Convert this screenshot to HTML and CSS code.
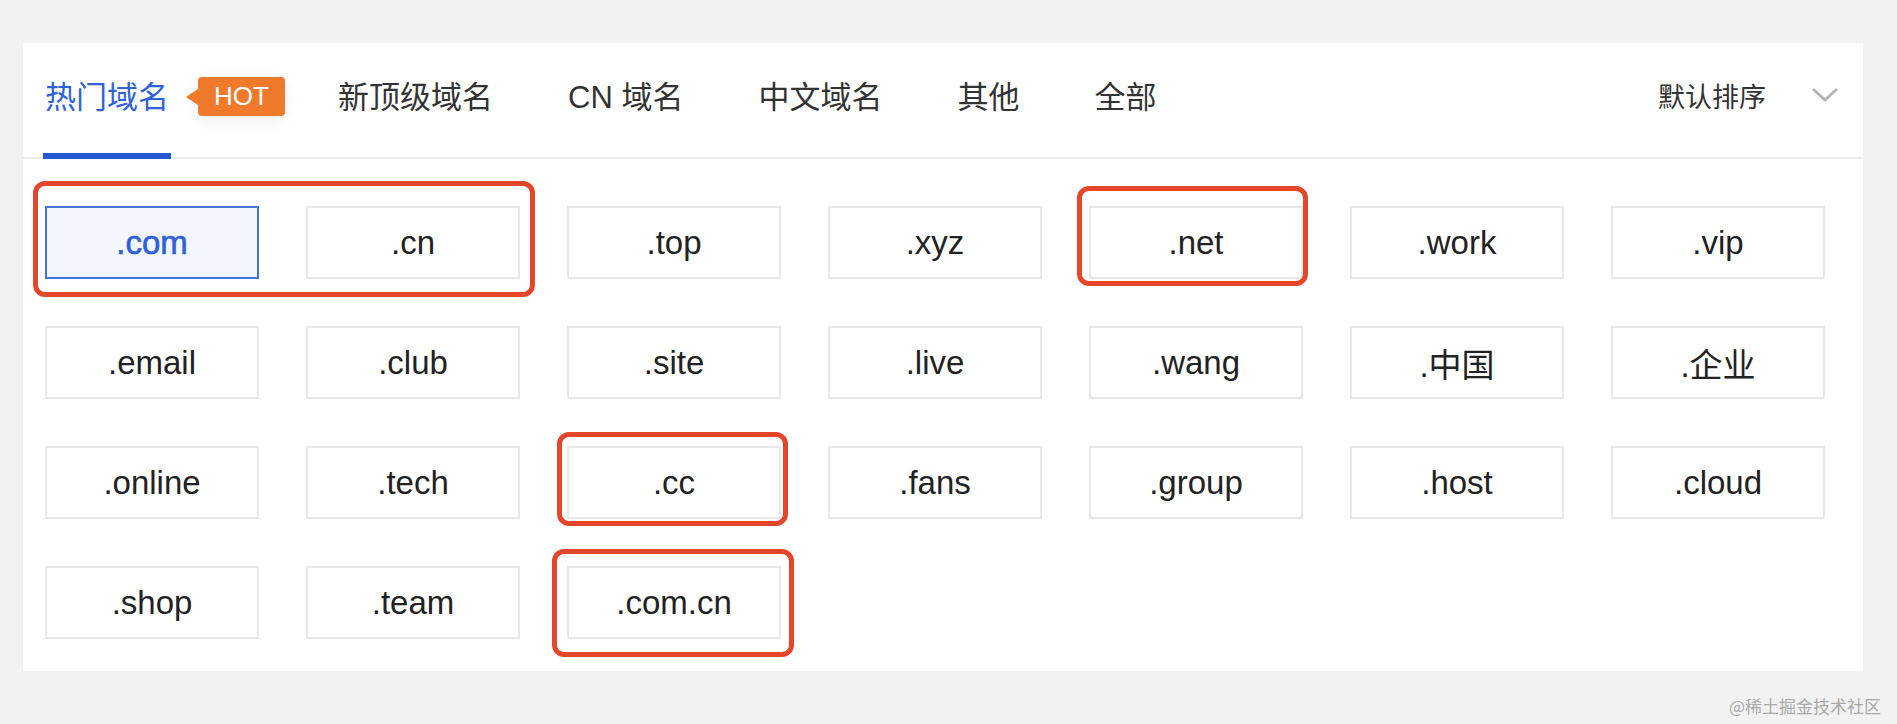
FILE: index.html
```html
<!DOCTYPE html>
<html lang="zh-CN">
<head>
    <meta charset="UTF-8">
    <meta name="viewport" content="width=device-width, initial-scale=1.0">
    <title>域名注册</title>
    <link rel="stylesheet" href="styles.css">
</head>
<body>
    <div class="panel">
        <div class="tabs">
            <div class="tab active">热门域名</div>
            <span class="hot">HOT</span>
            <div class="tab">新顶级域名</div>
            <div class="tab">CN 域名</div>
            <div class="tab">中文域名</div>
            <div class="tab">其他</div>
            <div class="tab">全部</div>
            <div class="sort">
                <span>默认排序</span>
                <svg class="chevron" width="28" height="16" viewBox="0 0 28 16">
                    <path d="M2 2 L14 13 L26 2" fill="none" stroke="#b4b4b8" stroke-width="3"/>
                </svg>
            </div>
        </div>

        <div class="grid">
            <div class="suffix selected">.com</div>
            <div class="suffix">.cn</div>
            <div class="suffix">.top</div>
            <div class="suffix">.xyz</div>
            <div class="suffix">.net</div>
            <div class="suffix">.work</div>
            <div class="suffix">.vip</div>

            <div class="suffix">.email</div>
            <div class="suffix">.club</div>
            <div class="suffix">.site</div>
            <div class="suffix">.live</div>
            <div class="suffix">.wang</div>
            <div class="suffix">.中国</div>
            <div class="suffix">.企业</div>

            <div class="suffix">.online</div>
            <div class="suffix">.tech</div>
            <div class="suffix">.cc</div>
            <div class="suffix">.fans</div>
            <div class="suffix">.group</div>
            <div class="suffix">.host</div>
            <div class="suffix">.cloud</div>

            <div class="suffix">.shop</div>
            <div class="suffix">.team</div>
            <div class="suffix">.com.cn</div>
        </div>

        <!-- 标注框 -->
        <div class="mark mark-a"></div>
        <div class="mark mark-b"></div>
        <div class="mark mark-c"></div>
        <div class="mark mark-d"></div>
    </div>
    <div class="watermark">@稀土掘金技术社区</div>
</body>
</html>
```

FILE: styles.css
```css
body {
    margin: 0;
    background-color: #f2f2f2;
    font-family: "Liberation Sans", "Noto Sans CJK SC", sans-serif;
    color: #222;
}
.panel {
    position: relative;
    margin: 43px 0 0 23px;
    width: 1840px;
    height: 628px;
    background-color: #fff;
    box-sizing: border-box;
}
.tabs {
    display: flex;
    align-items: stretch;
    height: 116px;
    padding-left: 20px;
    border-bottom: 2px solid #ececec;
    box-sizing: border-box;
}
.tab {
    display: flex;
    align-items: center;
    padding: 0 2px 8px;
    margin-right: 71px;
    font-size: 31px;
    color: #333;
    border-bottom: 6px solid transparent;
    margin-bottom: -2px;
}
.tab.active {
    color: #2f62d8;
    border-bottom-color: #2357d3;
    margin-right: 0;
}
.hot {
    position: relative;
    align-self: center;
    margin: -8px 51px 0 27px;
    width: 87px;
    height: 39px;
    line-height: 39px;
    text-align: center;
    font-size: 26px;
    color: #fff;
    background-color: #ef7a2c;
    border-radius: 4px;
    box-shadow: 0 4px 16px rgba(0, 0, 0, 0.08);
}
.hot::before {
    content: "";
    position: absolute;
    left: -12px;
    top: 12px;
    border-top: 8px solid transparent;
    border-bottom: 8px solid transparent;
    border-right: 12px solid #ef7a2c;
}
.sort {
    margin-left: auto;
    display: flex;
    align-items: center;
    padding-right: 24px;
    padding-bottom: 10px;
    font-size: 27px;
    color: #333;
}
.chevron {
    margin-left: 45px;
}
.grid {
    display: grid;
    grid-template-columns: repeat(7, 214px);
    grid-auto-rows: 73px;
    column-gap: 47px;
    row-gap: 47px;
    padding: 47px 0 0 22px;
}
.suffix {
    display: flex;
    align-items: center;
    justify-content: center;
    border: 2px solid #e8e8e8;
    font-size: 33px;
    color: #222;
}
.suffix.selected {
    border-color: #4274d9;
    background-color: #f3f6fd;
    color: #2d5fd6;
    -webkit-text-stroke: 0.6px #2d5fd6;
}
.mark {
    position: absolute;
    border: 5px solid #e4462b;
    border-radius: 12px;
    box-sizing: border-box;
}
.mark-a { left: 10px; top: 138px; width: 502px; height: 116px; }
.mark-b { left: 1054px; top: 143px; width: 231px; height: 100px; }
.mark-c { left: 534px; top: 389px; width: 231px; height: 94px; }
.mark-d { left: 529px; top: 506px; width: 242px; height: 108px; }
.watermark {
    margin-top: 22px;
    padding-right: 16px;
    text-align: right;
    font-family: "Noto Sans CJK SC", sans-serif;
    font-size: 17px;
    color: #a9a9a9;
}
```
